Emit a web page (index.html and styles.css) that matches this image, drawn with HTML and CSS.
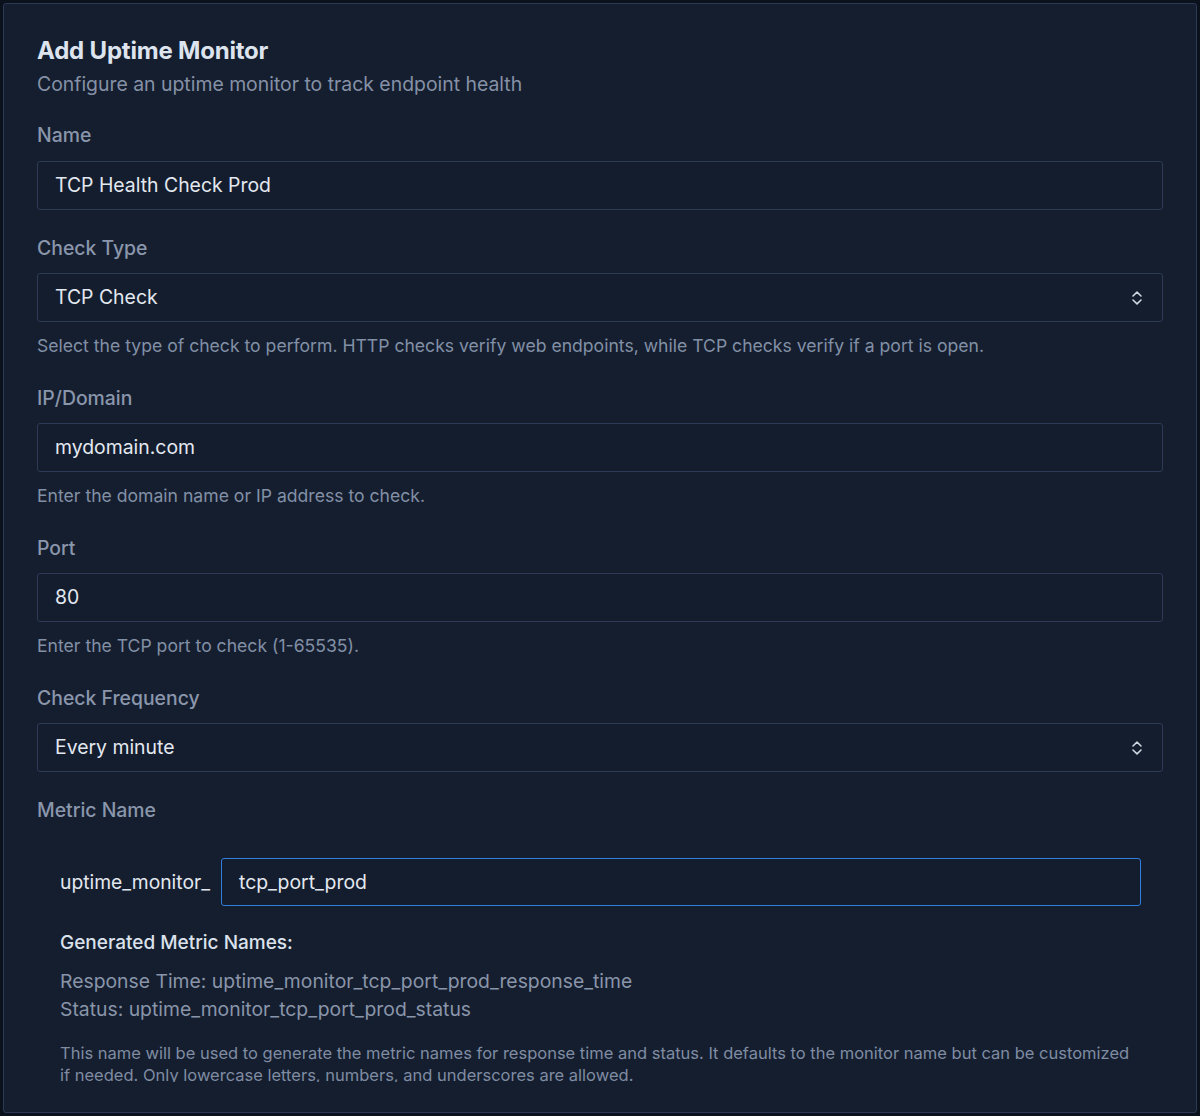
FILE: index.html
```html
<!DOCTYPE html>
<html>
<head>
<meta charset="utf-8">
<link rel="stylesheet" href="styles.css">
</head>
<body>
<div class="dialog">
  <div class="scroll">
    <h1 class="title">Add Uptime Monitor</h1>
    <p class="subtitle">Configure an uptime monitor to track endpoint health</p>

    <div class="field">
      <label class="label">Name</label>
      <div class="input">TCP Health Check Prod</div>
    </div>

    <div class="field">
      <label class="label">Check Type</label>
      <div class="input select">TCP Check
        <svg class="chev" width="12" height="16" viewBox="0 0 12 16"><path d="M2 6 L6 2.2 L10 6 M2 10 L6 13.8 L10 10" fill="none" stroke="#cfd6e2" stroke-width="1.6" stroke-linecap="round" stroke-linejoin="round"/></svg>
      </div>
      <p class="help">Select the type of check to perform. HTTP checks verify web endpoints, while TCP checks verify if a port is open.</p>
    </div>

    <div class="field">
      <label class="label">IP/Domain</label>
      <div class="input">mydomain.com</div>
      <p class="help">Enter the domain name or IP address to check.</p>
    </div>

    <div class="field">
      <label class="label">Port</label>
      <div class="input">80</div>
      <p class="help">Enter the TCP port to check (1-65535).</p>
    </div>

    <div class="field">
      <label class="label">Check Frequency</label>
      <div class="input select">Every minute
        <svg class="chev" width="12" height="16" viewBox="0 0 12 16"><path d="M2 6 L6 2.2 L10 6 M2 10 L6 13.8 L10 10" fill="none" stroke="#cfd6e2" stroke-width="1.6" stroke-linecap="round" stroke-linejoin="round"/></svg>
      </div>
    </div>

    <div class="field metric">
      <label class="label">Metric Name</label>
      <div class="metric-box">
        <div class="prefix-row">
          <span class="prefix">uptime_monitor_</span>
          <div class="input focus">tcp_port_prod</div>
        </div>
        <div class="gen-title">Generated Metric Names:</div>
        <div class="gen-list">
          <div>Response Time: uptime_monitor_tcp_port_prod_response_time</div>
          <div>Status: uptime_monitor_tcp_port_prod_status</div>
        </div>
        <p class="note">This name will be used to generate the metric names for response time and status. It defaults to the monitor name but can be customized if needed. Only lowercase letters, numbers, and underscores are allowed.</p>
      </div>
    </div>
  </div>
</div>
</body>
</html>
```

FILE: styles.css
```css
* { box-sizing: border-box; }
html, body { margin: 0; padding: 0; }
body {
  background: #0b111d;
  font-family: Inter, "Noto Sans", sans-serif;
  width: 1200px;
  height: 1116px;
  overflow: hidden;
}
.dialog {
  margin: 3px;
  width: 1194px;
  height: 1110px;
  border: 1px solid #2b3955;
  border-radius: 3px;
  background: #151e2f;
  padding: 0 33px 29px 33px;
}
.scroll {
  height: 1078px;
  overflow: hidden;
  padding-top: 31px;
}
.title {
  margin: 0;
  font-size: 24px;
  line-height: 32px;
  font-weight: 700;
  color: #dde4ee;
  letter-spacing: -0.2px;
}
.subtitle {
  margin: 4px 0 0;
  font-size: 19.4px;
  line-height: 26px;
  color: #8591a6;
}
.field { margin-top: 25px; }
.label {
  display: block;
  font-size: 19.4px;
  line-height: 26px;
  font-weight: 500;
  color: #8a96ab;
  margin-bottom: 12.5px;
}
.input {
  height: 49px;
  border: 1px solid #2d3b57;
  border-radius: 3px;
  background: #141d2d;
  color: #e3e8f0;
  font-size: 19.4px;
  line-height: 47px;
  padding: 0 17px;
  position: relative;
}
.select { display: flex; justify-content: space-between; align-items: center; }
.chev { margin-right: 2px; }
.help {
  margin: 13px 0 0;
  padding-bottom: 2.5px;
  font-size: 17.6px;
  line-height: 22px;
  color: #8290a6;
}
.metric .label { margin-bottom: 0; }
.metric-box { padding: 35px 22px 0 23px; }
.prefix-row {
  display: flex;
  align-items: center;
  gap: 11px;
}
.prefix {
  font-size: 19.3px;
  color: #e3e8f0;
}
.input.focus {
  flex: 1;
  border-color: #2f7ee0;
  height: 48px;
}
.gen-title {
  margin-top: 24px;
  font-size: 19px;
  line-height: 26px;
  font-weight: 500;
  color: #dbe2ec;
}
.gen-list {
  margin-top: 11px;
  font-size: 19.35px;
  line-height: 28px;
  color: #8995a9;
}
.note {
  margin: 19px 0 0;
  font-size: 16.5px;
  line-height: 22px;
  color: #7f8ca2;
}
```
